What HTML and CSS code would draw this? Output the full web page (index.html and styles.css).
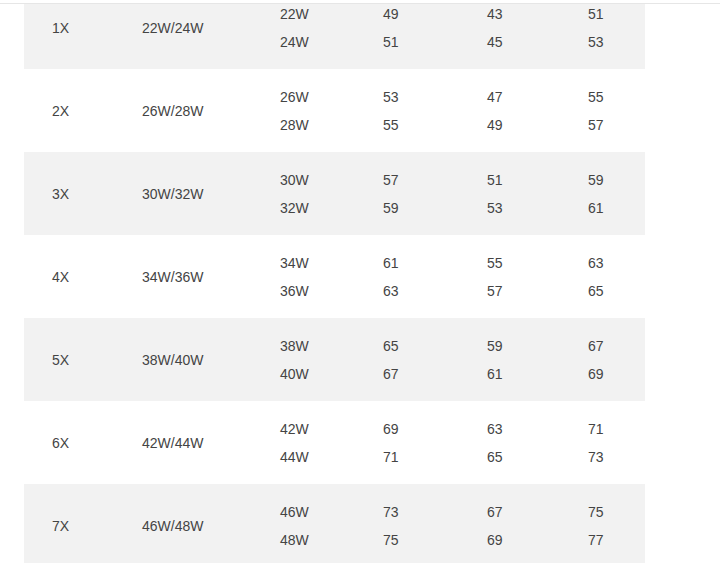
FILE: index.html
```html
<!DOCTYPE html>
<html>
<head>
<meta charset="utf-8">
<link rel="stylesheet" href="styles.css">
</head>
<body>
<div class="frame">
<table class="size-table">
<colgroup>
<col class="c1"><col class="c2"><col class="c3"><col class="c4"><col class="c5"><col class="c6">
</colgroup>
<tbody>
<tr class="alt"><td class="first">1X</td><td>22W/24W</td><td>22W<br>24W</td><td>49<br>51</td><td>43<br>45</td><td>51<br>53</td></tr>
<tr><td class="first">2X</td><td>26W/28W</td><td>26W<br>28W</td><td>53<br>55</td><td>47<br>49</td><td>55<br>57</td></tr>
<tr class="alt"><td class="first">3X</td><td>30W/32W</td><td>30W<br>32W</td><td>57<br>59</td><td>51<br>53</td><td>59<br>61</td></tr>
<tr><td class="first">4X</td><td>34W/36W</td><td>34W<br>36W</td><td>61<br>63</td><td>55<br>57</td><td>63<br>65</td></tr>
<tr class="alt"><td class="first">5X</td><td>38W/40W</td><td>38W<br>40W</td><td>65<br>67</td><td>59<br>61</td><td>67<br>69</td></tr>
<tr><td class="first">6X</td><td>42W/44W</td><td>42W<br>44W</td><td>69<br>71</td><td>63<br>65</td><td>71<br>73</td></tr>
<tr class="alt"><td class="first">7X</td><td>46W/48W</td><td>46W<br>48W</td><td>73<br>75</td><td>67<br>69</td><td>75<br>77</td></tr>
</tbody>
</table>
</div>
</body>
</html>
```

FILE: styles.css
```css
html, body {
  margin: 0;
  padding: 0;
  background: #fff;
}
.frame {
  margin-top: 3px;
  border-top: 1px solid #e6e6e6;
  height: 559px;
  overflow: hidden;
}
.size-table {
  margin-top: -18px;
  margin-left: 24px;
  border-collapse: collapse;
  table-layout: fixed;
  width: 621px;
  font-family: "Liberation Sans", Arial, sans-serif;
  font-size: 14px;
  color: #444;
}
.c1 { width: 118px; }
.c2 { width: 138px; }
.c3 { width: 103px; }
.c4 { width: 104px; }
.c5 { width: 101px; }
.c6 { width: 57px; }
.size-table tr {
  height: 83px;
}
.size-table tr.alt {
  background: #f2f2f2;
}
.size-table td {
  padding: 0;
  line-height: 28px;
  vertical-align: middle;
  text-align: left;
}
.size-table td.first {
  padding-left: 28px;
}
```
